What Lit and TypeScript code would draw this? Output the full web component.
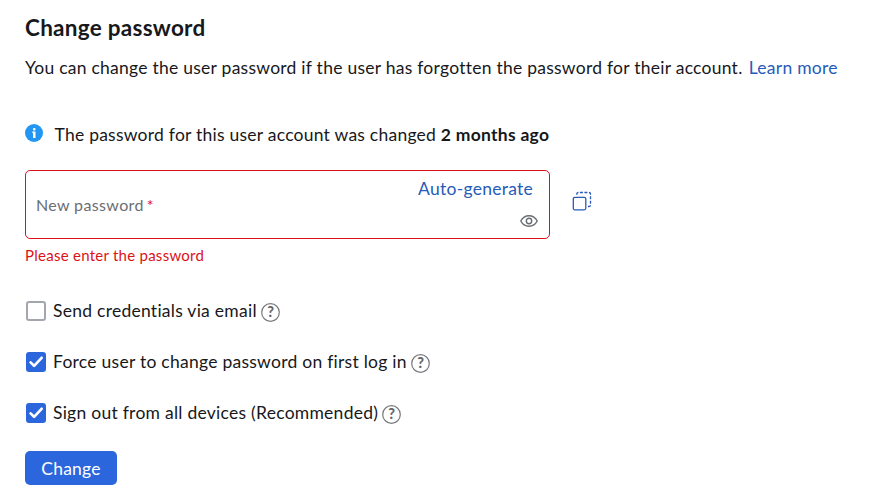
import { LitElement, html, css, svg } from "lit";
import { customElement, property } from "lit/decorators.js";
import { classMap } from "lit/directives/class-map.js";

@customElement("option-row")
class OptionRow extends LitElement {
  @property() label = "";
  @property({ type: Boolean }) checked = false;

  static styles = css`
    :host {
      display: flex;
      align-items: center;
      height: 24px;
      margin-bottom: 27px;
    }
    .box {
      box-sizing: border-box;
      width: 20px;
      height: 20px;
      border: 2px solid #a3a6ac;
      border-radius: 3px;
      margin: 0 7.4px 0 0.6px;
      background: #fff;
      flex: none;
    }
    .box.on {
      border: 0;
      background: #2b66dd;
    }
    .box svg {
      display: block;
    }
    .label {
      white-space: nowrap;
    }
    .help {
      flex: none;
      margin: 2px 0 0 4.2px;
      width: 19px;
      height: 19px;
    }
    .help text {
      font-size: 14.5px;
      font-weight: 900;
      letter-spacing: 0;
    }
  `;

  render() {
    return html`
      <span class=${classMap({ box: true, on: this.checked })}>
        ${this.checked
          ? html`<svg width="20" height="20" viewBox="0 0 20 20" fill="none">
              ${svg`<path d="M4.6 10.4 8.1 13.9 15.6 5.8" stroke="#fff" stroke-width="2.7" stroke-linecap="round" stroke-linejoin="round" />`}
            </svg>`
          : null}
      </span>
      <span class="label">${this.label}</span>
      <svg class="help" viewBox="0 0 19 19">
        <circle cx="9.5" cy="9.5" r="8.8" fill="none" stroke="#77797e" stroke-width="1.2" />
        <text x="9.5" y="14" text-anchor="middle" fill="#66686d">?</text>
      </svg>
    `;
  }
}

@customElement("app-root")
class AppRoot extends LitElement {
  static styles = css`
    :host {
      display: block;
      box-sizing: border-box;
      height: 504px;
      padding: 12px 0 0 25px;
      background: #fff;
      color: #17181b;
      font-family: Lato, "Liberation Sans", sans-serif;
      font-size: 17.5px;
      line-height: 24px;
      letter-spacing: 0.26px;
    }
    h1 {
      margin: 0;
      font-size: 22.5px;
      line-height: 32px;
      font-weight: 700;
      letter-spacing: 0.27px;
    }
    .intro {
      margin: 12px 0 0;
      white-space: nowrap;
      letter-spacing: 0.252px;
    }
    .link {
      color: #275bb8;
    }
    .intro .link {
      margin-left: 1.5px;
    }
    .notice {
      display: flex;
      align-items: center;
      margin-top: 43px;
    }
    .notice svg {
      margin: -4px 11.5px 0 0;
    }
    .text {
      letter-spacing: 0.24px;
    }
    b {
      letter-spacing: 0.27px;
    }
    .entry {
      display: flex;
      align-items: center;
      margin-top: 23px;
    }
    .field {
      box-sizing: border-box;
      width: 525px;
      height: 69px;
      border: 1.25px solid #dc1216;
      border-radius: 5px;
      padding: 0 11px 0 10px;
      display: flex;
      align-items: center;
      justify-content: space-between;
    }
    .placeholder {
      color: #6b6e74;
      font-size: 16px;
      letter-spacing: 0.36px;
      padding-top: 1px;
    }
    .star {
      color: #dc1216;
      margin-left: 3px;
    }
    .tools {
      display: flex;
      flex-direction: column;
      align-items: flex-end;
      margin-top: -5px;
    }
    .tools .link {
      margin-right: 5px;
    }
    .tools svg {
      margin-top: 14px;
    }
    .copy {
      margin: -7px 0 0 22px;
    }
    .error {
      color: #dc1216;
      font-size: 15px;
      line-height: 20px;
      margin: 6px 0 34px;
    }
    .submit {
      display: block;
      width: 92px;
      height: 34px;
      margin-top: -1px;
      border: 0;
      border-radius: 5px;
      background: #2b66dd;
      color: #fff;
      font: inherit;
      letter-spacing: 0.2px;
      padding: 2px 0 0;
    }
  `;

  render() {
    return html`
      <h1>Change password</h1>
      <p class="intro">
        You can change the user password if the user has forgotten the password for their account.
        <span class="link">Learn more</span>
      </p>
      <div class="notice">
        <svg width="18" height="18" viewBox="0 0 18 18">
          <circle cx="9" cy="9" r="9" fill="#2196f3" />
          <rect x="8" y="4" width="2.5" height="2.4" rx="1" fill="#fff" />
          <path d="M7.3 7.4h3.2V14H8V9h-.7z" fill="#fff" />
        </svg>
        <span class="text">The password for this user account was changed <b>2 months ago</b></span>
      </div>
      <div class="entry">
        <div class="field">
          <span class="placeholder">New password<span class="star">*</span></span>
          <div class="tools">
            <span class="link">Auto-generate</span>
            <svg width="18" height="12" viewBox="0 0 18 12" fill="none" stroke="#686b71" stroke-width="1.4">
              <path d="M.8 6C2.5 2.7 5.4.8 9 .8S15.5 2.7 17.2 6C15.5 9.3 12.6 11.2 9 11.2S2.5 9.3.8 6z" />
              <circle cx="9" cy="6" r="2.7" />
            </svg>
          </div>
        </div>
        <svg class="copy" width="20" height="20" viewBox="0 0 20 20" fill="none" stroke="#275bb8" stroke-width="1.3">
          <rect x="1.3" y="6.3" width="12.5" height="12.5" rx="1.5" />
          <path d="M4.8 3.7V2.9Q4.8 1.5 6.2 1.5H17Q18.5 1.5 18.5 3V14Q18.5 15.5 17 15.5H16" stroke-dasharray="3 1.5" />
        </svg>
      </div>
      <div class="error">Please enter the password</div>
      <option-row label="Send credentials via email"></option-row>
      <option-row label="Force user to change password on first log in" checked></option-row>
      <option-row label="Sign out from all devices (Recommended)" checked></option-row>
      <button class="submit">Change</button>
    `;
  }
}
